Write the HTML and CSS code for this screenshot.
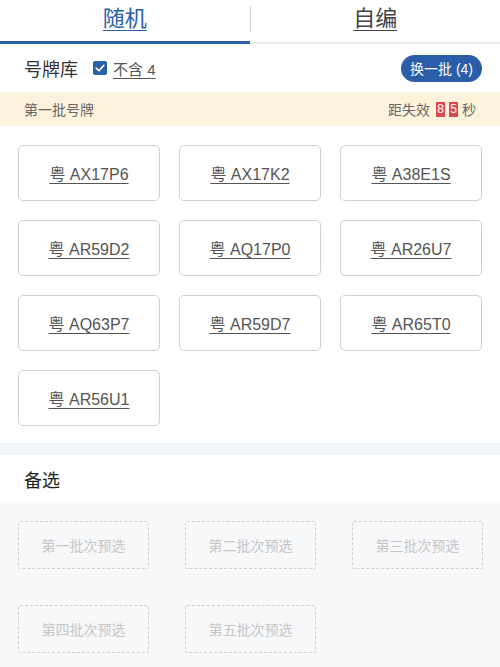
FILE: index.html
```html
<!DOCTYPE html>
<html lang="zh">
<head>
<meta charset="utf-8">
<link rel="stylesheet" href="styles.css">
</head>
<body>
<div class="tabs">
  <div class="tab active"><span>随机</span></div>
  <div class="tab-sep"></div>
  <div class="tab"><span>自编</span></div>
</div>
<div class="lib-row">
  <div class="lib-left">
    <span class="lib-title">号牌库</span>
    <span class="check"><svg viewBox="0 0 14 14" width="14" height="14"><rect x="0" y="0" width="14" height="14" rx="2" fill="#2a5ea8"/><path d="M3.2 7.2 L6 9.8 L10.8 4.4" fill="none" stroke="#fff" stroke-width="1.6" stroke-linecap="round" stroke-linejoin="round"/></svg></span>
    <span class="no4">不含 4</span>
  </div>
  <button class="swap">换一批 (4)</button>
</div>
<div class="batch-bar">
  <span>第一批号牌</span>
  <span class="expire">距失效<b class="dig">8</b><b class="dig">5</b>秒</span>
</div>
<div class="plates">
  <div class="plate"><span>粤 AX17P6</span></div>
  <div class="plate"><span>粤 AX17K2</span></div>
  <div class="plate"><span>粤 A38E1S</span></div>
  <div class="plate"><span>粤 AR59D2</span></div>
  <div class="plate"><span>粤 AQ17P0</span></div>
  <div class="plate"><span>粤 AR26U7</span></div>
  <div class="plate"><span>粤 AQ63P7</span></div>
  <div class="plate"><span>粤 AR59D7</span></div>
  <div class="plate"><span>粤 AR65T0</span></div>
  <div class="plate"><span>粤 AR56U1</span></div>
</div>
<div class="band"></div>
<div class="alt-head">备选</div>
<div class="alt-area">
  <div class="slot">第一批次预选</div>
  <div class="slot">第二批次预选</div>
  <div class="slot">第三批次预选</div>
  <div class="slot">第四批次预选</div>
  <div class="slot">第五批次预选</div>
</div>
</body>
</html>
```
FILE: styles.css
```css
* { box-sizing: border-box; }
html, body { margin: 0; padding: 0; }
body {
  width: 500px;
  height: 667px;
  overflow: hidden;
  background: #f7f8fa;
  font-family: "Liberation Sans", "Noto Sans CJK SC", sans-serif;
  color: #333;
}
.tabs {
  display: flex;
  align-items: stretch;
  height: 44px;
  background: #fff;
}
.tab {
  flex: 1;
  display: flex;
  justify-content: center;
  align-items: flex-start;
  padding-top: 4px;
  font-size: 22px;
  color: #444;
  border-bottom: 2px solid #ececec;
}
.tab span { text-decoration: underline; text-underline-offset: 4px; text-decoration-thickness: 1px; line-height: 30px; }
.tab.active { color: #2a5ea8; border-bottom: 3px solid #2a5ea8; }
.tab-sep {
  width: 1px;
  background: #d4d4d4;
  margin: 6px 0 12px;
}
.lib-row {
  height: 48px;
  background: #fff;
  display: flex;
  align-items: center;
  justify-content: space-between;
  padding: 0 18px 0 24px;
}
.lib-left { display: flex; align-items: center; }
.lib-title { font-size: 18px; color: #333; margin-right: 15px; }
.check { display: flex; width: 14px; height: 14px; margin-right: 6px; }
.no4 { font-size: 15px; color: #555; text-decoration: underline; text-underline-offset: 3px; }
.swap {
  height: 27px;
  width: 81px;
  border: none;
  border-radius: 14px;
  background: #2a5ea8;
  color: #fff;
  font-family: inherit;
  font-size: 14px;
  padding: 0;
}
.batch-bar {
  height: 34px;
  background: #fdf3dc;
  display: flex;
  align-items: center;
  justify-content: space-between;
  padding: 0 24px;
  font-size: 14px;
  color: #666;
}
.expire { display: flex; align-items: center; }
.dig {
  display: inline-block;
  width: 9px;
  height: 15px;
  line-height: 15px;
  margin-left: 4px;
  background: #e0474c;
  color: #fff;
  font-weight: normal;
  font-size: 12px;
  text-align: center;
}
.dig:first-child { margin-left: 6px; }
.dig + .dig { margin-right: 4px; }
.plates {
  background: #fff;
  display: grid;
  grid-template-columns: repeat(3, 142px);
  column-gap: 19px;
  row-gap: 19px;
  padding: 19px 18px 17px;
}
.plate {
  height: 56px;
  border: 1.5px solid #cfcfcf;
  border-radius: 5px;
  display: flex;
  align-items: center;
  justify-content: center;
  font-size: 16px;
  color: #555;
}
.plate span { text-decoration: underline; text-underline-offset: 3px; }
.band { height: 12px; background: #f3f6f9; }
.alt-head {
  height: 47px;
  background: #fff;
  display: flex;
  align-items: center;
  padding-left: 24px;
  font-size: 18px;
  color: #222;
}
.alt-area {
  display: grid;
  grid-template-columns: repeat(3, 131px);
  column-gap: 36px;
  row-gap: 36px;
  padding: 19px 18px;
}
.slot {
  height: 48px;
  border: 1px dashed #cfcfcf;
  border-radius: 2px;
  display: flex;
  align-items: center;
  justify-content: center;
  font-size: 14px;
  color: #c6c6c6;
}
```
